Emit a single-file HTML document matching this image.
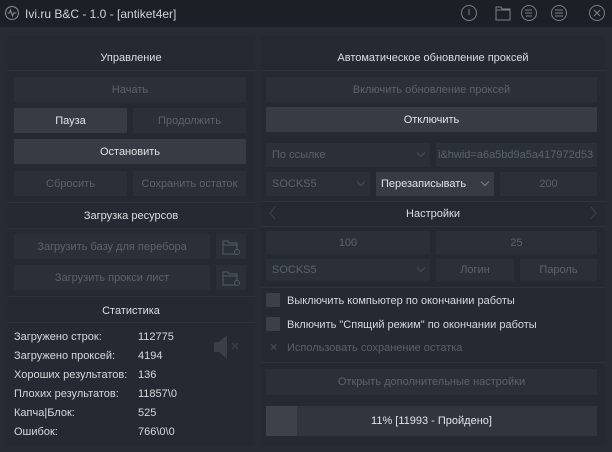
<!DOCTYPE html>
<html><head><meta charset="utf-8"><style>
*{margin:0;padding:0;box-sizing:border-box}
body{width:612px;height:452px;background:#262b34;font-family:"Liberation Sans",sans-serif;font-size:11px;color:#d8dade;position:relative;overflow:hidden}
.a{position:absolute}
.tb{left:0;top:0;width:612px;height:27px;background:#1b1f26}
.pn{background:#252a32}
.b{position:absolute;background:#2b3038;color:#5c626b;display:flex;align-items:center;justify-content:center;font-size:11px}
.b.on{background:#363b44;color:#e2e4e8}
.h{position:absolute;text-align:center;color:#dcdee2;font-size:11px}
.ln{position:absolute;height:1px;background:#2e333b}
.t{position:absolute;font-size:11px;color:#d6d8dc;white-space:nowrap}
.cb{position:absolute;width:14px;height:14px;background:#3a3f48}
.ch{position:absolute;right:6px;top:50%;width:6px;height:6px;margin-top:-5px;border-right:1px solid #4a4f57;border-bottom:1px solid #4a4f57;transform:rotate(45deg)}
</style></head><body>
<div class="a tb"></div>
<svg class="a" style="left:4px;top:5px" width="16" height="16"><circle cx="8" cy="8" r="6.5" fill="none" stroke="#8a8f96"/><path d="M3.5 8h2l1-3 2 6 1-3h3" fill="none" stroke="#8a8f96" stroke-width="1"/></svg>
<div class="t" style="left:25px;top:7px;font-size:12px;color:#d0d2d6">Ivi.ru B&amp;C - 1.0 - [antiket4er]</div>
<svg class="a" style="left:460px;top:3px" width="150" height="20" fill="none" stroke="#7b8087" stroke-width="1">
<circle cx="9" cy="10" r="7.5"/><path d="M9 6v6"/>
<path d="M36 4h5l1 2h8v11h-14z M36 7h14"/>
<circle cx="69" cy="10" r="7.5"/><path d="M65 7h7M65 10h7M66 13h6"/>
<circle cx="99" cy="10" r="7.5"/><path d="M95 7h8M95 10h8M95 13h8"/>
<circle cx="137" cy="10" r="7.5"/><path d="M134 7l6 6M140 7l-6 6"/>
</svg>
<div class="a pn" style="left:7px;top:36px;width:248px;height:410px"></div>
<div class="a pn" style="left:261px;top:36px;width:344px;height:410px"></div>

<div class="h" style="left:7px;width:248px;top:52px">Управление</div>
<div class="ln" style="left:7px;width:248px;top:70px"></div>
<div class="b" style="left:14px;top:77px;width:232px;height:25px">Начать</div>
<div class="b on" style="left:14px;top:108px;width:113px;height:25px">Пауза</div>
<div class="b" style="left:133px;top:108px;width:113px;height:25px">Продолжить</div>
<div class="b on" style="left:14px;top:139px;width:232px;height:25px">Остановить</div>
<div class="b" style="left:14px;top:171px;width:113px;height:25px">Сбросить</div>
<div class="b" style="left:133px;top:171px;width:113px;height:25px">Сохранить остаток</div>
<div class="ln" style="left:7px;width:248px;top:202px;background:#2f343c"></div>
<div class="h" style="left:7px;width:248px;top:210px">Загрузка ресурсов</div>
<div class="ln" style="left:7px;width:248px;top:228px"></div>
<div class="b" style="left:14px;top:234px;width:196px;height:25px">Загрузить базу для перебора</div>
<div class="b" style="left:216px;top:234px;width:30px;height:25px"></div>
<div class="b" style="left:14px;top:265px;width:196px;height:25px">Загрузить прокси лист</div>
<div class="b" style="left:216px;top:265px;width:30px;height:25px"></div>
<svg class="a" style="left:222px;top:239px" width="20" height="50" fill="none" stroke="#555b63"><path d="M1 2h5l1 2h8v11h-14zM1 6h14"/><circle cx="15" cy="13" r="2.5" fill="#2b3038"/><path d="M1 33h5l1 2h8v11h-14zM1 37h14"/><circle cx="15" cy="44" r="2.5" fill="#2b3038"/></svg>
<div class="ln" style="left:7px;width:248px;top:296px"></div>
<div class="h" style="left:7px;width:248px;top:305px">Статистика</div>
<div class="ln" style="left:7px;width:248px;top:322px"></div>
<div class="t" style="left:14px;top:331px">Загружено строк:</div><div class="t" style="left:138px;top:331px">112775</div>
<div class="t" style="left:14px;top:350px">Загружено проксей:</div><div class="t" style="left:138px;top:350px">4194</div>
<div class="t" style="left:14px;top:369px">Хороших результатов:</div><div class="t" style="left:138px;top:369px">136</div>
<div class="t" style="left:14px;top:388px">Плохих результатов:</div><div class="t" style="left:138px;top:388px">11857\0</div>
<div class="t" style="left:14px;top:407px">Капча|Блок:</div><div class="t" style="left:138px;top:407px">525</div>
<div class="t" style="left:14px;top:426px">Ошибок:</div><div class="t" style="left:138px;top:426px">766\0\0</div>
<svg class="a" style="left:212px;top:333px" width="30" height="28"><path d="M2 9h5l8-7v24l-8-7h-5z" fill="#3a3f47"/><path d="M20 10l6 6M26 10l-6 6" stroke="#3a3f47" stroke-width="1.5"/></svg>

<div class="h" style="left:261px;width:344px;top:52px">Автоматическое обновление проксей</div>
<div class="ln" style="left:261px;width:344px;top:70px"></div>
<div class="b" style="left:266px;top:77px;width:331px;height:25px">Включить обновление проксей</div>
<div class="b on" style="left:266px;top:107px;width:331px;height:25px">Отключить</div>
<div class="b" style="left:266px;top:143px;width:164px;height:24px;justify-content:flex-start;padding-left:6px">По ссылке<span class="ch"></span></div>
<div class="b" style="left:436px;top:143px;width:161px;height:24px;justify-content:flex-start;padding-left:2px;overflow:hidden;white-space:nowrap">i&amp;hwid=a6a5bd9a5a417972d53</div>
<div class="b" style="left:266px;top:172px;width:104px;height:24px;justify-content:flex-start;padding-left:6px">SOCKS5<span class="ch"></span></div>
<div class="b on" style="left:376px;top:172px;width:118px;height:24px;justify-content:flex-start;padding-left:5px">Перезаписывать<span class="ch" style="border-color:#80858c"></span></div>
<div class="b" style="left:500px;top:172px;width:97px;height:24px">200</div>
<div class="ln" style="left:261px;width:344px;top:201px"></div>
<div class="h" style="left:261px;width:344px;top:208px">Настройки</div>
<svg class="a" style="left:268px;top:206px" width="330" height="14" fill="none" stroke="#3e434b"><path d="M7 1l-5 6 5 6M323 1l5 6-5 6"/></svg>
<div class="ln" style="left:261px;width:344px;top:226px"></div>
<div class="b" style="left:266px;top:231px;width:164px;height:23px">100</div>
<div class="b" style="left:436px;top:231px;width:161px;height:23px">25</div>
<div class="b" style="left:266px;top:259px;width:164px;height:22px;justify-content:flex-start;padding-left:6px">SOCKS5<span class="ch"></span></div>
<div class="b" style="left:436px;top:259px;width:78px;height:22px">Логин</div>
<div class="b" style="left:520px;top:259px;width:77px;height:22px">Пароль</div>
<div class="ln" style="left:261px;width:344px;top:287px"></div>
<div class="cb" style="left:266px;top:293px"></div><div class="t" style="left:287px;top:295px">Выключить компьютер по окончании работы</div>
<div class="cb" style="left:266px;top:317px"></div><div class="t" style="left:287px;top:319px">Включить "Спящий режим" по окончании работы</div>
<div class="t" style="left:269px;top:341px;color:#474c54">✕</div><div class="t" style="left:287px;top:342px;color:#5a6068">Использовать сохранение остатка</div>
<div class="ln" style="left:261px;width:344px;top:362px"></div>
<div class="b" style="left:266px;top:369px;width:331px;height:26px">Открыть дополнительные настройки</div>
<div class="b on" style="left:266px;top:406px;width:331px;height:30px;background:#30353e"><div class="a" style="left:0;top:0;width:31px;height:30px;background:#3c414a"></div><span style="position:relative">11% [11993 - Пройдено]</span></div>
</body></html>
